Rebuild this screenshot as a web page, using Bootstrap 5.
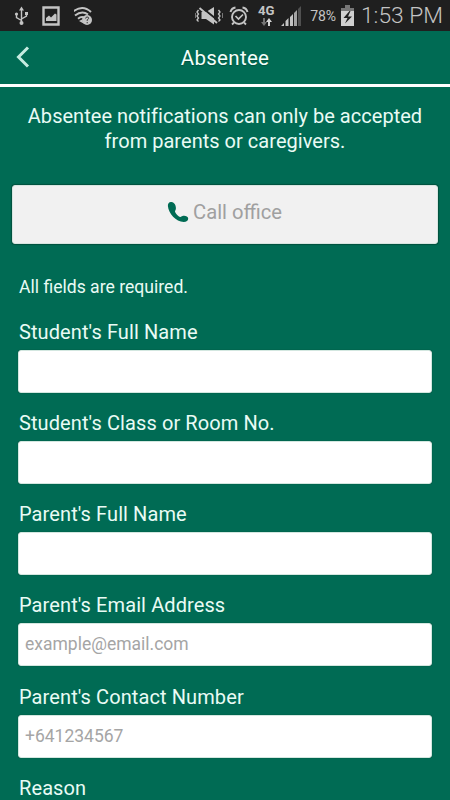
<!DOCTYPE html>
<html lang="en">
<head>
<meta charset="utf-8">
<meta name="viewport" content="width=device-width, initial-scale=1">
<title>Absentee</title>
<link href="https://cdn.jsdelivr.net/npm/bootstrap@5.3.0/dist/css/bootstrap.min.css" rel="stylesheet">
<style>
  html, body { height: 100%; }
  body { background: #006b54; color: #e9fbf5; font-family: Roboto, "Liberation Sans", sans-serif; font-size: 20px; line-height: 25px; }
  .screen { height: 800px; }
  .status-bar { height: 31px; background: #1f1f1f; color: #c4c4c4; padding: 0 7px 0 12px; }
  .status-bar svg { display: block; flex: none; }
  .battery-text { font-size: 14px; letter-spacing: -.1px; margin: 2px 4px 0 8px; }
  .clock { font-size: 22.8px; font-weight: 300; white-space: nowrap; margin: 0 0 0 6px; }
  .title-bar { height: 55.5px; border-bottom: 3px solid #fff; display: grid; grid-template-columns: 60px 1fr 60px; }
  .title-bar h1 { font-size: 20.5px; font-weight: 400; letter-spacing: .3px; color: #f4fffb; text-shadow: 0 1px 1px #00523f; padding-top: 2px; }
  .intro { padding: 17px 20px 0; height: 98px; letter-spacing: .03px; }
  .call { margin: 0 12px; height: 59.5px; border-radius: 3px; background: #f1f1f1; color: #a0a0a0; font-size: 20.2px; border: 1px solid #d7e5e0; box-shadow: 0 0 1px 1px #00523f; padding: 0 1px 4px 0; width: auto; }
  .fields { padding: 29.5px 18px 0; }
  .note { font-size: 17.6px; line-height: 27px; height: 45px; padding-left: 1px; }
  .entry { height: 91.25px; }
  .entry label { display: block; height: 31px; line-height: 26px; padding-left: 1px; font-size: 20px; letter-spacing: .1px; white-space: nowrap; }
  .entry input { height: 43px; border-radius: 3px; border: 1px solid #d3e7e0; background: #fff; padding: 0 6px 1px; font-size: 17.5px; box-shadow: 0 0 1px #003c2e; }
  .entry input::placeholder { color: #a5a5a5; opacity: 1; }
</style>
</head>
<body>
<div class="screen overflow-hidden">
  <div class="status-bar d-flex align-items-center">
    <svg width="18" height="22" viewBox="0 0 18 22" fill="none" stroke="#c4c4c4" stroke-width="1.4"><path d="M9.5 4v14M9.5 15.500l-5-3V9M9.500 14l5-3V9"/><path d="M9.500 1.500l-2.500 4h5zM13 7h3v3h-3z" fill="#c4c4c4" stroke="none"/><circle cx="4.500" cy="9" r="1.600" fill="#c4c4c4" stroke="none"/><circle cx="9.500" cy="18" r="2" fill="#c4c4c4" stroke="none"/></svg>
    <svg class="ms-2 me-2" width="28" height="22" viewBox="0 0 28 22"><path d="M5.500 2.500h15v17h-15z" fill="none" stroke="#c4c4c4" stroke-width="2.400"/><path d="M8 16v-3l3-2.500 2 2 4-4 1.500 1V16z" fill="#c4c4c4"/></svg>
    <svg width="22" height="22" viewBox="0 0 22 22"><g fill="none" stroke="#c4c4c4" stroke-width="2"><path d="M-1.500 7q10-8 18.500 0M1 10.500q7-5.500 13-1M4 13.700q3.500-2.800 6.500-1"/></g><path d="M5 16l3-1.500 1.500 4z" fill="#c4c4c4"/><circle cx="13" cy="15" r="5" fill="#c4c4c4"/><path d="M11.600 13.500q.2-1.600 1.600-1.500 1.600.1 1.400 1.400-.1.800-1.400 1.500v1M13.200 17v1.300" stroke="#333" fill="none"/></svg>
    <svg class="ms-auto" width="30" height="22" viewBox="0 0 30 22"><path d="M6.500 7h4.500l8-5v17.500L11 14H6.500z" fill="#c4c4c4"/><path d="M6.500 2.200l18 14.500" stroke="#1f1f1f" stroke-width="2"/><path d="M4.500 3l17.500 15" stroke="#c4c4c4" stroke-width="2"/><path d="M3.500 5L2 7l1.500 2L2 11l1.500 2L2 15l1.500 1.500M23.500 5L25 7l-1.500 2 1.500 2-1.500 2 1.500 2-1.500 1.500" fill="none" stroke="#c4c4c4" stroke-width="1.300"/><path d="M.5 8v5M27.500 8v5" stroke="#777"/></svg>
    <svg class="ms-1" width="20" height="22" viewBox="0 0 20 22" fill="none" stroke="#c4c4c4"><circle cx="10" cy="12" r="7" stroke-width="1.900"/><path d="M1.500 7q1-4 5-4.500M18.500 7q-1-4-5-4.500" stroke-width="2"/><path d="M6.500 11l3 3 4.500-4.500" stroke-width="1.700"/><path d="M5 17.500l-2 2M15 17.500l2 2" stroke-width="1.800"/></svg>
    <svg class="ms-2" width="19" height="26" viewBox="0 0 19 26"><text x="1" y="12" font-family="Roboto, sans-serif" font-size="13.500" font-weight="700" fill="#c4c4c4" textLength="16.500" lengthAdjust="spacingAndGlyphs">4G</text><path d="M6 15v4H4l3 4 3-4H8v-4z" fill="#747474"/><path d="M11 23v-4H9l3-4 3 4h-2v4z" fill="#d4d4d4"/></svg>
    <svg class="ms-1 me-1" width="22" height="22" viewBox="0 0 22 22"><path d="M1 21l3-3v3zM5.500 21v-5l3-3v8zM10 21v-9l3-3v12z" fill="#c4c4c4"/><path d="M14 21V8l3-3v16z" fill="#a4a4a4"/><path d="M18 21V4l3-3v20z" fill="#505050"/></svg>
    <span class="battery-text ms-1">78%</span>
    <svg width="15" height="22" viewBox="0 0 15 22"><path d="M5 0h5v3h4v3H1V3h4z" fill="#777"/><path d="M1 6h13v15H1z" fill="#d0d0d0"/><path d="M9.500 6L3.500 13h4L5 18.500l7-7H8L10.500 6z" fill="#1f1f1f"/></svg>
    <span class="clock">1:53 PM</span>
  </div>

  <header class="title-bar align-items-center">
    <svg class="ms-3" width="15" height="24" viewBox="0 0 15 24"><path d="M12 2.500L2.500 12l9.500 9.500" fill="none" stroke="#c5ebe0" stroke-width="3"/></svg>
    <h1 class="text-center m-0">Absentee</h1>
  </header>

  <main>
    <p class="intro text-center m-0">Absentee notifications can only be accepted<br>from parents or caregivers.</p>
    <div class="d-grid">
      <button type="button" class="call d-flex align-items-center justify-content-center">
        <svg class="me-1" width="22" height="22" viewBox="0 0 22 22"><path d="M4.500 1C2 .7.700 2.500.900 5c.5 7 8.100 16 15.800 16 2.700 0 4.600-1.600 4.500-3.600-.1-2.200-3.600-3.200-5.700-2.400-1 .4-1.600 1.200-2.500.9-1.700-.8-4.100-3.200-4.900-5-.4-1 .7-1.700.8-3.200C9.100 4.700 7.500 1.200 4.500 1z" fill="#006b54"/></svg>
        <span>Call office</span>
      </button>
    </div>
    <form class="fields">
      <div class="note">All fields are required.</div>
      <div class="entry"><label for="student">Student's Full Name</label><input id="student" class="w-100 d-block" type="text"></div>
      <div class="entry"><label for="room">Student's Class or Room No.</label><input id="room" class="w-100 d-block" type="text"></div>
      <div class="entry"><label for="parent">Parent's Full Name</label><input id="parent" class="w-100 d-block" type="text"></div>
      <div class="entry"><label for="email">Parent's Email Address</label><input id="email" class="w-100 d-block" type="email" placeholder="example@email.com"></div>
      <div class="entry"><label for="phone">Parent's Contact Number</label><input id="phone" class="w-100 d-block" type="tel" placeholder="+641234567"></div>
      <div class="entry"><label for="reason">Reason</label><input id="reason" class="w-100 d-block" type="text"></div>
    </form>
  </main>
</div>
<script src="https://cdn.jsdelivr.net/npm/bootstrap@5.3.0/dist/js/bootstrap.bundle.min.js"></script>
</body>
</html>
